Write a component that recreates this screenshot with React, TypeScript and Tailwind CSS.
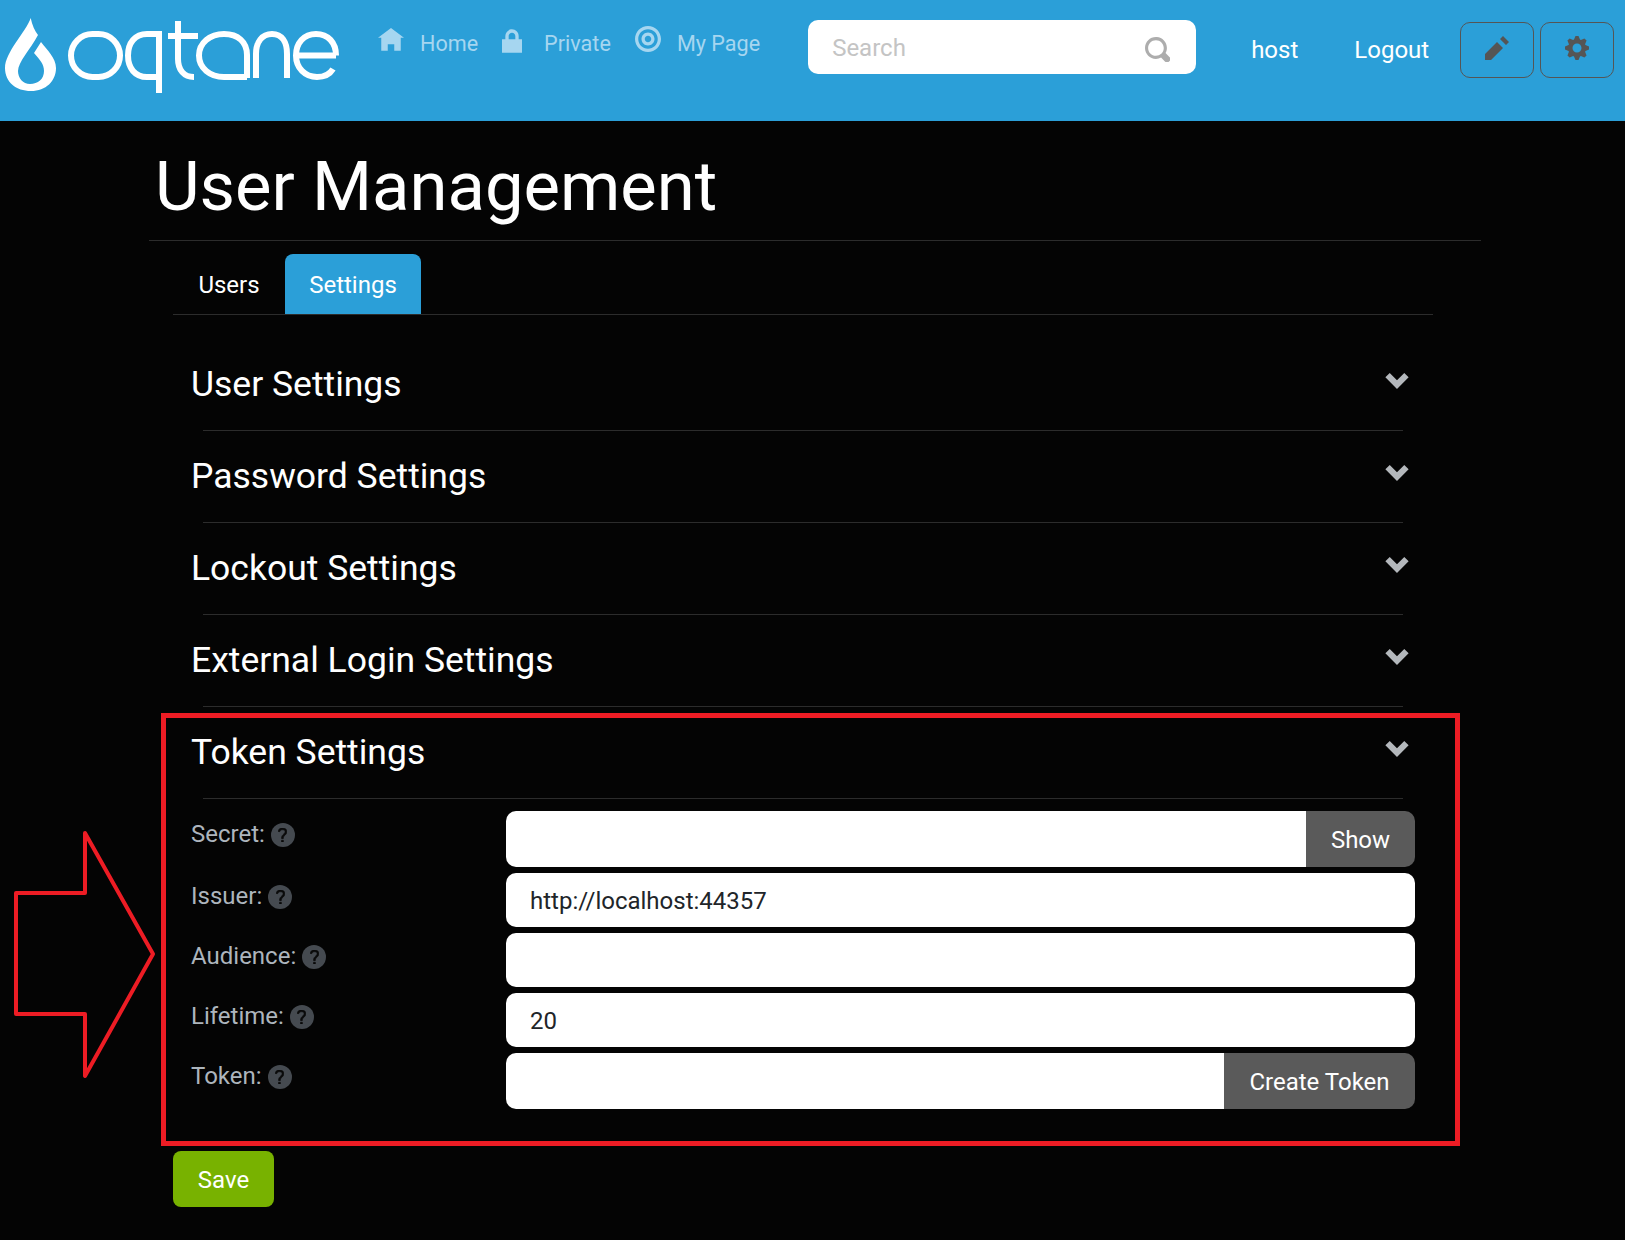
import type { ReactNode } from "react"

const font = { fontFamily: "Roboto, sans-serif" }

const Icon = ({ d, box = "0 0 8 8", className }: { d: string; box?: string; className: string }) => (
  <svg viewBox={box} className={className} fill="currentColor" aria-hidden="true">
    <path d={d} />
  </svg>
)

const icons = {
  home: "M4 0l-4 3h1v4h2v-2h2v2h2v-4.03l1 .03-4-3z",
  lock: "M3 0c-1.1 0-2 .9-2 2v1h-1v4h6v-4h-1v-1c0-1.1-.9-2-2-2zm0 1c.56 0 1 .44 1 1v1h-2v-1c0-.56.44-1 1-1z",
  target: "M4 0c-2.2 0-4 1.8-4 4s1.8 4 4 4 4-1.8 4-4-1.8-4-4-4zm0 1c1.66 0 3 1.34 3 3s-1.34 3-3 3-3-1.34-3-3 1.34-3 3-3zm0 1c-1.1 0-2 .9-2 2s.9 2 2 2 2-.9 2-2-.9-2-2-2zm0 1c.56 0 1 .44 1 1s-.44 1-1 1-1-.44-1-1 .44-1 1-1z",
  pencil: "M6 0l-1 1 2 2 1-1-2-2zm-2 2l-4 4v2h2l4-4-2-2z",
  cog: "M3.5 0l-.5 1.19c-.1.03-.19.08-.28.13l-1.19-.5-.72.72.5 1.19c-.05.1-.09.18-.13.28l-1.19.5v1l1.19.5c.04.1.08.18.13.28l-.5 1.19.72.72 1.19-.5c.09.04.18.09.28.13l.5 1.19h1l.5-1.19c.09-.04.19-.08.28-.13l1.19.5.72-.72-.5-1.19c.04-.09.09-.19.13-.28l1.19-.5v-1l-1.19-.5c-.03-.09-.08-.19-.13-.28l.5-1.19-.72-.72-1.19.5c-.09-.04-.19-.09-.28-.13l-.5-1.19h-1zm.5 2.5c.83 0 1.5.67 1.5 1.5s-.67 1.5-1.5 1.5-1.5-.67-1.5-1.5.67-1.5 1.5-1.5z",
  search: "M3.5 0c-1.93 0-3.5 1.57-3.5 3.5s1.57 3.5 3.5 3.5c.59 0 1.17-.14 1.66-.41a1 1 0 0 0 .13.13l1 1a1.02 1.02 0 1 0 1.44-1.44l-1-1a1 1 0 0 0-.16-.13c.27-.49.44-1.06.44-1.66 0-1.93-1.57-3.5-3.5-3.5zm0 1c1.39 0 2.5 1.11 2.5 2.5 0 .66-.24 1.27-.66 1.72-.01.01-.02.02-.03.03a1 1 0 0 0-.13.13c-.44.4-1.04.63-1.69.63-1.39 0-2.5-1.11-2.5-2.5s1.11-2.5 2.5-2.5z",
  chevron: "M1.5 0l-1.5 1.5 4 4 4-4-1.5-1.5-2.5 2.5-2.5-2.5z",
  question: "M2.47 0c-.85 0-1.48.26-1.88.66-.4.4-.54.9-.59 1.28l1 .13c.04-.25.12-.5.31-.69.19-.19.49-.38 1.16-.38.66 0 1.02.16 1.22.34.2.18.28.4.28.66 0 .83-.34 1.06-.84 1.5-.5.44-1.16 1.08-1.16 2.25v.25h1v-.25c0-.83.31-1.06.81-1.5.5-.44 1.19-1.08 1.19-2.25 0-.48-.17-1.02-.59-1.41-.43-.39-1.07-.59-1.91-.59zm-.5 7v1h1v-1h-1z",
}

// logo: drop plus wordmark, both drawn
const Logo = () => (
  <svg viewBox="0 0 340 100" className="w-[340px] h-[100px] shrink-0 text-white" aria-label="oqtane">
    <path
      d="M30.7 18C26 32 5 52 5 68c0 14 11 23 26 23s25-10 25-23c0-10-9-18-15-26l-7 11c6 7 10 11 10 18 0 8-6 13-14 13-7 0-12-6-12-13 0-9 12-21 20-36-3-4-6-10-7.300-17z"
      fill="currentColor"
    />
    <g fill="none" stroke="currentColor" strokeWidth="6">
      <rect x="71" y="34" width="49" height="43" rx="21.500" />
      <path d="M159 93V34h-12c-12 0-19 9-19 21.500s7 21.500 19 21.500h12" />
      <path d="M178 21v38c0 11 6 18 16 18M168 36h30" />
      <path d="M247 78V55c0-13-9-21-23-21s-25 9-25 21.500 11 21.500 25 21.500h23" />
      <path d="M256 78V54c0-12 6-20 16-20s15 8 15 20v24" />
      <path d="M336 55.500c0-13-8-21.500-20-21.500s-20 9-20 21.500 9 21.500 21 21.500c8 0 13-3 16-8M296 55.500h40" />
    </g>
  </svg>
)

const NavItem = ({ icon, label, box, iconClass }: { icon: string; label: string; box?: string; iconClass: string }) => (
  <div className="flex items-center h-[30px] text-[#a6d6f0]">
    <Icon d={icon} box={box} className={iconClass} />
    <span className="text-[21.6px] leading-none">{label}</span>
  </div>
)

const Header = () => (
  <header className="h-[121px] bg-[#2b9fd8] flex items-start shrink-0">
    <Logo />
    <nav className="flex items-center gap-[24px] ml-[38px] mt-[29px]">
      <NavItem icon={icons.home} label="Home" iconClass="w-[26px] h-[26px] mr-[16px] -mt-[6px]" />
      <NavItem icon={icons.lock} label="Private" box="0 0 6 7" iconClass="w-[20px] h-[24px] mr-[22px] -mt-[6px]" />
      <NavItem icon={icons.target} label="My Page" iconClass="w-[26px] h-[26px] mr-[16px] -mt-[10px]" />
    </nav>
    <div className="w-[388px] h-[54px] mt-[20px] ml-[48px] bg-white rounded-[10px] flex items-center justify-between pl-[24px] pr-[26px]">
      <span className="text-[24px] text-[#c4c4c4] mt-[2px]">Search</span>
      <Icon d={icons.search} className="w-[25px] h-[25px] text-[#adadad] mt-1" />
    </div>
    <span className="text-[24px] text-white mt-[35px] ml-[55px] leading-[30px]">host</span>
    <span className="text-[24px] text-white mt-[35px] ml-[56px] leading-[30px]">Logout</span>
    <button className="w-[74px] h-[56px] mt-[22px] ml-[31px] border border-[#555] rounded-[10px] flex items-center justify-center text-[#555]">
      <Icon d={icons.pencil} className="w-[24px] h-[24px] -mt-1" />
    </button>
    <button className="w-[74px] h-[56px] mt-[22px] ml-[6px] border border-[#555] rounded-[10px] flex items-center justify-center text-[#555]">
      <Icon d={icons.cog} className="w-[24px] h-[24px] -mt-1" />
    </button>
  </header>
)

const Heading = ({ title, first }: { title: string; first?: boolean }) => (
  <div>
    <div className={`flex items-center justify-between pl-[18px] pr-[24px] ${first ? "h-[115px] pt-[24px]" : "h-[91px]"}`}>
      <h2 className="text-[35.5px] text-white leading-none mt-[1px]">{title}</h2>
      <Icon d={icons.chevron} box="0 0 8 5.500" className="w-[24px] h-[16px] text-[#b4b8bc] -mt-2" />
    </div>
    <div className="h-px bg-[#2c2c2c] ml-[30px] mr-[30px]" />
  </div>
)

const Help = () => (
  <span className="w-[24px] h-[24px] rounded-full bg-[#454a50] inline-flex items-center justify-center ml-[6px] mt-[2px]">
    <Icon d={icons.question} box="0 0 5 8" className="w-[9px] h-[14px] text-[#0a0a0a] stroke-current stroke-[0.4]" />
  </span>
)

const Row = ({ label, height, children }: { label: string; height: string; children: ReactNode }) => (
  <div className="flex items-start">
    <div className="w-[333px] shrink-0 pl-[18px] pt-[5px] flex items-center text-[24px] text-[#adb5bd]">
      {label}
      <Help />
    </div>
    <div className={`w-[909px] flex ${height}`}>{children}</div>
  </div>
)

const Field = ({ value }: { value?: string }) => (
  <div className="flex-1 h-full bg-white rounded-[10px] flex items-center px-[24px] pt-[2px] text-[24px] text-[#212529]">{value}</div>
)

const Addon = ({ label, width }: { label: string; width: string }) => (
  <>
    <div className="flex-1 h-full bg-white rounded-l-[10px]" />
    <button className={`${width} h-full bg-[#5a5a5a] rounded-r-[10px] pt-[2px] text-[24px] text-white`}>{label}</button>
  </>
)

export default function App() {
  return (
    <div className="relative min-h-[1240px] bg-[#040404] flex flex-col" style={font}>
      <Header />
      <main className="ml-[149px] w-[1332px]">
        <div className="h-[120px] border-b border-[#2c2c2c] flex items-center pl-[6px]">
          <h1 className="text-[68.8px] text-white leading-none mt-[14px]">User Management</h1>
        </div>
        <div className="ml-[24px] w-[1260px]">
          <div className="mt-[13px] h-[61px] border-b border-[#2c2c2c] flex items-stretch">
            <div className="w-[112px] flex items-center justify-center pt-[2px] text-[24px] text-white">Users</div>
            <div className="w-[136px] bg-[#2b9fd8] rounded-t-[8px] flex items-center justify-center pt-[2px] text-[24px] text-white">Settings</div>
          </div>
          <Heading first title="User Settings" />
          <Heading title="Password Settings" />
          <Heading title="Lockout Settings" />
          <Heading title="External Login Settings" />
          <Heading title="Token Settings" />
          <div className="mt-[12px] flex flex-col gap-[6px]">
            <Row label="Secret:" height="h-[56px]">
              <Addon label="Show" width="w-[109px]" />
            </Row>
            <Row label="Issuer:" height="h-[54px]">
              <Field value="http://localhost:44357" />
            </Row>
            <Row label="Audience:" height="h-[54px]">
              <Field />
            </Row>
            <Row label="Lifetime:" height="h-[54px]">
              <Field value="20" />
            </Row>
            <Row label="Token:" height="h-[56px]">
              <Addon label="Create Token" width="w-[191px]" />
            </Row>
          </div>
          <button className="mt-[42px] w-[101px] h-[56px] bg-[#78b200] rounded-[8px] pt-[2px] text-[24px] text-white">Save</button>
        </div>
      </main>

      {/* red annotation laid over the page */}
      <div className="absolute left-[161px] top-[713px] w-[1299px] h-[433px] border-[5px] border-[#ed1c24]" />
      <svg className="absolute left-0 top-[820px] w-[170px] h-[270px]" viewBox="0 820 170 270" aria-hidden="true">
        <path d="M85 833L153 954 85 1076V1014H16V893H85Z" fill="none" stroke="#ed1c24" strokeWidth="4" strokeLinejoin="round" />
      </svg>
    </div>
  )
}
